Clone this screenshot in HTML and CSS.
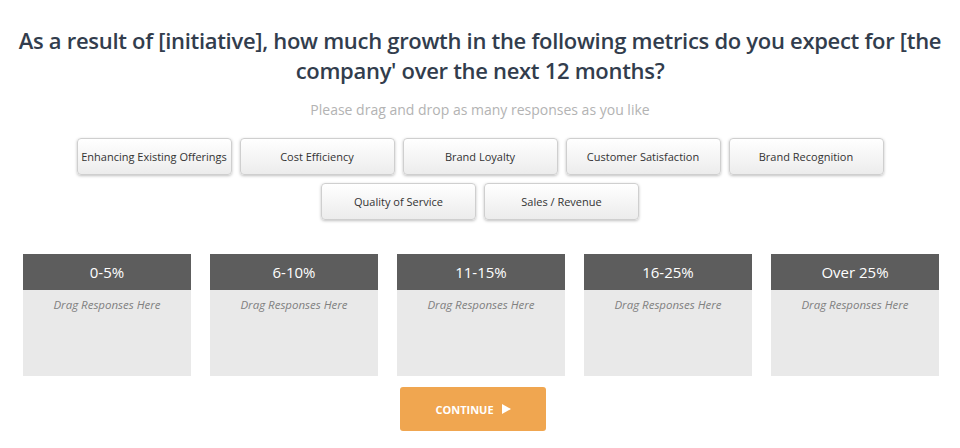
FILE: index.html
```html
<!DOCTYPE html>
<html lang="en">
<head>
    <meta charset="UTF-8">
    <meta name="viewport" content="width=device-width, initial-scale=1.0">
    <title>Growth Expectations</title>
    <link rel="stylesheet" href="styles.css">
</head>
<body>

    <div class="question">
        <h1>As a result of [initiative], how much growth in the following metrics do you expect for [the company' over the next 12 months?</h1>
        <p class="hint">Please drag and drop as many responses as you like</p>

        <!-- Response chips -->
        <div class="chips">
            <div class="chip">Enhancing Existing Offerings</div>
            <div class="chip">Cost Efficiency</div>
            <div class="chip">Brand Loyalty</div>
            <div class="chip">Customer Satisfaction</div>
            <div class="chip">Brand Recognition</div>
            <div class="chip">Quality of Service</div>
            <div class="chip">Sales / Revenue</div>
        </div>

        <!-- Drop buckets -->
        <div class="buckets">
            <div class="bucket"><h3>0-5%</h3><div class="drop">Drag Responses Here</div></div>
            <div class="bucket"><h3>6-10%</h3><div class="drop">Drag Responses Here</div></div>
            <div class="bucket"><h3>11-15%</h3><div class="drop">Drag Responses Here</div></div>
            <div class="bucket"><h3>16-25%</h3><div class="drop">Drag Responses Here</div></div>
            <div class="bucket"><h3>Over 25%</h3><div class="drop">Drag Responses Here</div></div>
        </div>

        <div class="actions">
            <button class="btn-continue">CONTINUE <span class="arrow"></span></button>
        </div>
    </div>

</body>
</html>
```

FILE: styles.css
```css
/* Basic Styles */
body {
    background-color: #ffffff;
    font-family: "Open Sans", Arial, sans-serif;
    margin: 0;
    padding: 0;
}

.question {
    width: 960px;
    padding-top: 25px;
    box-sizing: border-box;
}

h1 {
    margin: 0 6px;
    font-size: 22px;
    font-weight: 600;
    letter-spacing: -0.3px;
    line-height: 30px;
    text-align: center;
    color: #323d4d;
}

.hint {
    margin: 15px 0 0;
    font-size: 14px;
    line-height: 20px;
    text-align: center;
    color: #b3b3b3;
}

/* Chips */
.chips {
    display: flex;
    flex-wrap: wrap;
    justify-content: center;
    gap: 8px;
    width: 820px;
    margin: 18px auto 0;
}

.chip {
    width: 155px;
    height: 37px;
    box-sizing: border-box;
    display: flex;
    align-items: center;
    justify-content: center;
    font-size: 11px;
    color: #333;
    background: linear-gradient(#ffffff, #ececec);
    border: 1px solid #cfcfcf;
    border-radius: 4px;
    box-shadow: 0 1px 3px rgba(0, 0, 0, 0.25);
    cursor: move;
}

/* Buckets */
.buckets {
    display: flex;
    gap: 19px;
    width: 916px;
    margin: 34px 0 0 23px;
}

.bucket {
    flex: 1;
}

.bucket h3 {
    margin: 0;
    height: 36px;
    line-height: 37px;
    background-color: #5d5d5d;
    color: #fff;
    font-size: 15px;
    font-weight: 400;
    text-align: center;
}

.drop {
    height: 86px;
    box-sizing: border-box;
    padding-top: 7px;
    background-color: #e9e9e9;
    color: #808080;
    font-size: 11.5px;
    font-style: italic;
    text-align: center;
}

/* Continue */
.actions {
    display: flex;
    justify-content: center;
    margin-top: 11px;
    padding-right: 14px;
}

.btn-continue {
    width: 146px;
    height: 44px;
    border: none;
    border-radius: 3px;
    background-color: #f0a650;
    color: #fff;
    font-family: "Open Sans", Arial, sans-serif;
    font-size: 11px;
    font-weight: 700;
    display: flex;
    align-items: center;
    justify-content: center;
    gap: 8px;
    padding: 0;
    cursor: pointer;
}

.arrow {
    width: 0;
    height: 0;
    border-top: 5px solid transparent;
    border-bottom: 5px solid transparent;
    border-left: 9px solid #fff;
}
```
